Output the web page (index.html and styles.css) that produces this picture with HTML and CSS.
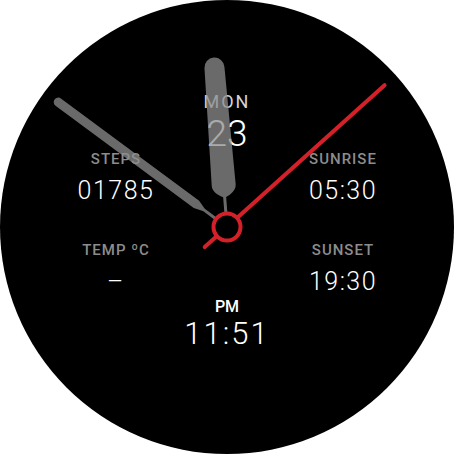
FILE: index.html
```html
<!DOCTYPE html>
<html lang="en">
<head>
  <meta charset="UTF-8" />
  <meta name="viewport" content="width=device-width, initial-scale=1.0"/>
  <title>Watch face</title>
  <link rel="stylesheet" href="styles.css">
</head>
<body>
  <div class="face">
    <div class="date">
      <div class="weekday">MON</div>
      <div class="day">23</div>
    </div>

    <div class="stats">
      <div class="stat">
        <div class="label">STEPS</div>
        <div class="value">01785</div>
      </div>
      <div class="stat">
        <div class="label">SUNRISE</div>
        <div class="value">05:30</div>
      </div>
      <div class="stat">
        <div class="label">TEMP ºC</div>
        <div class="value">–</div>
      </div>
      <div class="stat">
        <div class="label">SUNSET</div>
        <div class="value">19:30</div>
      </div>
    </div>

    <div class="clock">
      <div class="ampm">PM</div>
      <div class="time">11:51</div>
    </div>

    <!-- analog hands over the text -->
    <svg class="hands" viewBox="0 0 454 454" width="454" height="454">
      <g transform="translate(227 227)">
        <g class="hand" transform="rotate(-53.5)">
          <path d="M -4.5,-210 A 4.5 4.5 0 0 1 4.5,-210 L 4.5,-38 L 1.5,-29 L -1.5,-29 L -4.5,-38 Z" />
          <rect x="-1.5" y="-30" width="3" height="19" />
        </g>
        <g class="hand" transform="rotate(-4.5)">
          <path d="M -10,-160 A 10 10 0 0 1 10,-160 L 12,-42 C 12,-36 6,-32 1.5,-30 L -1.5,-30 C -6,-32 -12,-36 -12,-42 Z" />
          <rect x="-1.5" y="-31" width="3" height="20" />
        </g>
        <g transform="rotate(48)">
          <line class="second" x1="0" y1="30" x2="0" y2="-212" />
        </g>
        <circle class="hub" cx="0" cy="0" r="13.5" />
      </g>
    </svg>
  </div>
</body>
</html>
```

FILE: styles.css
```css
html, body {
  margin: 0;
  padding: 0;
  background: #ffffff;
}

.face {
  position: relative;
  width: 454px;
  height: 454px;
  border-radius: 50%;
  background: #000000;
  overflow: hidden;
  display: flex;
  flex-direction: column;
  align-items: center;
  padding-top: 92px;
  box-sizing: border-box;
  font-family: Roboto, "Liberation Sans", sans-serif;
  color: #ffffff;
  text-align: center;
}

.weekday {
  font-size: 18px;
  line-height: 20px;
  letter-spacing: 2px;
  color: #d4d4d4;
}

.day {
  margin-top: 7px;
  font-size: 37px;
  line-height: 30px;
  font-weight: 300;
}

.stats {
  margin-top: 1px;
  display: grid;
  grid-template-columns: 116px 116px;
  column-gap: 111px;
  row-gap: 36px;
  padding-left: 5px;
}

.label {
  font-size: 15px;
  line-height: 18px;
  font-weight: 500;
  letter-spacing: 1px;
  color: #8c8c8c;
}

.value {
  margin-top: 9px;
  font-size: 25px;
  line-height: 28px;
  font-weight: 300;
  letter-spacing: 1.5px;
}

.clock {
  margin-top: 2px;
}

.ampm {
  font-size: 16px;
  line-height: 18px;
  font-weight: 500;
}

.time {
  margin-top: 2px;
  font-size: 31px;
  line-height: 32px;
  font-weight: 300;
  letter-spacing: 2px;
}

.hands {
  position: absolute;
  left: 0;
  top: 0;
  pointer-events: none;
}

.hand {
  fill: #8e8e8e;
  opacity: 0.75;
}

.second {
  stroke: #d42129;
  stroke-width: 4;
  stroke-linecap: round;
}

.hub {
  fill: #000000;
  stroke: #d42129;
  stroke-width: 4;
}
```
